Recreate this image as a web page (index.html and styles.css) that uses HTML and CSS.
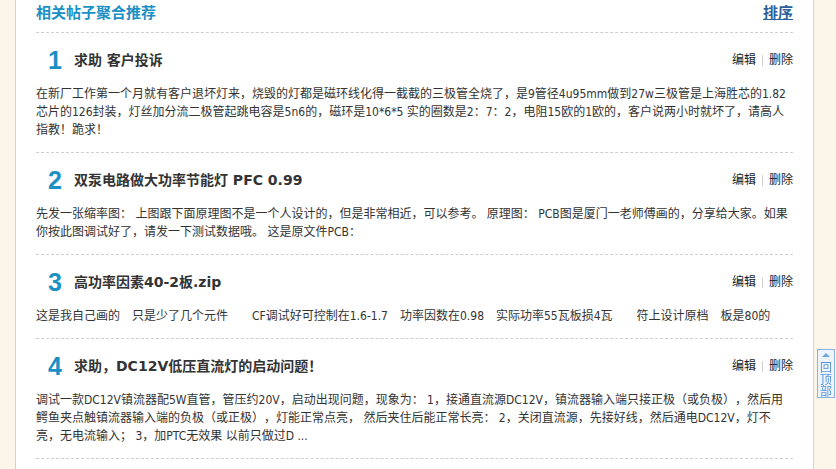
FILE: index.html
```html
<!DOCTYPE html>
<html lang="zh-CN">
<head>
<meta charset="utf-8">
<title>相关帖子聚合推荐</title>
<link rel="stylesheet" href="styles.css">
</head>
<body>
<div class="page">
  <div class="panel-head">
    <h2 class="panel-title">相关帖子聚合推荐</h2>
    <a class="sort-link" href="#">排序</a>
  </div>
  <ul class="post-list">
    <li class="post">
      <div class="post-head">
        <span class="post-num">1</span>
        <h3 class="post-title">求助 客户投诉</h3>
        <div class="post-ops"><a href="#">编辑</a><span class="sep"></span><a href="#">删除</a></div>
      </div>
      <p class="post-body">在新厂工作第一个月就有客户退坏灯来，烧毁的灯都是磁环线化得一截截的三极管全烧了，是9管径4u95mm做到27w三极管是上海胜芯的1.82芯片的126封装，灯丝加分流二极管起跳电容是5n6的，磁环是10*6*5 实的圈数是2：7：2，电阻15欧的1欧的，客户说两小时就坏了，请高人指教！跪求！</p>
    </li>
    <li class="post">
      <div class="post-head">
        <span class="post-num">2</span>
        <h3 class="post-title">双泵电路做大功率节能灯 PFC 0.99</h3>
        <div class="post-ops"><a href="#">编辑</a><span class="sep"></span><a href="#">删除</a></div>
      </div>
      <p class="post-body">先发一张缩率图： 上图跟下面原理图不是一个人设计的，但是非常相近，可以参考。 原理图： PCB图是厦门一老师傅画的，分享给大家。如果你按此图调试好了，请发一下测试数据哦。 这是原文件PCB：</p>
    </li>
    <li class="post">
      <div class="post-head">
        <span class="post-num">3</span>
        <h3 class="post-title">高功率因素40-2板.zip</h3>
        <div class="post-ops"><a href="#">编辑</a><span class="sep"></span><a href="#">删除</a></div>
      </div>
      <p class="post-body">这是我自己画的　只是少了几个元件　　CF调试好可控制在1.6-1.7　功率因数在0.98　实际功率55瓦板损4瓦　　符上设计原档　板是80的</p>
    </li>
    <li class="post">
      <div class="post-head">
        <span class="post-num">4</span>
        <h3 class="post-title">求助，DC12V低压直流灯的启动问题！</h3>
        <div class="post-ops"><a href="#">编辑</a><span class="sep"></span><a href="#">删除</a></div>
      </div>
      <p class="post-body">调试一款DC12V镇流器配5W直管，管压约20V，启动出现问题，现象为： 1，接通直流源DC12V，镇流器输入端只接正极（或负极），然后用鳄鱼夹点触镇流器输入端的负极（或正极），灯能正常点亮， 然后夹住后能正常长亮： 2，关闭直流源，先接好线，然后通电DC12V，灯不亮，无电流输入； 3，加PTC无效果 以前只做过D ...</p>
    </li>
  </ul>
</div>
<a class="back-top" href="#"><span class="back-arrow"></span>回顶部</a>
</body>
</html>
```

FILE: styles.css
```css
html, body {
  margin: 0;
  padding: 0;
}

body {
  background: #fbf6e9;
  color: #333;
  font: 12px/18px "DejaVu Sans Condensed", "Noto Sans CJK SC", sans-serif;
  text-spacing-trim: space-all;
  height: 469px;
  overflow: hidden;
}

a {
  text-decoration: none;
  color: inherit;
}

.page {
  margin-left: 15px;
  width: 799px;
  box-sizing: border-box;
  min-height: 469px;
  padding: 0 20px;
  background: #fff;
  border-left: 1px solid #c9d5db;
  border-right: 1px solid #d6d6d6;
}

.panel-head {
  display: flex;
  justify-content: space-between;
  align-items: flex-start;
  height: 32px;
  border-bottom: 1px dashed #cfcfcf;
}

.panel-title {
  margin: 0;
  font: bold 15px/27px "DejaVu Sans", "Noto Sans CJK SC", sans-serif;
  color: #1a90c4;
}

.sort-link {
  font: bold 15px/27px "DejaVu Sans", "Noto Sans CJK SC", sans-serif;
  color: #2d5f98;
  text-decoration: underline;
}

.post-list {
  list-style: none;
  margin: 0;
  padding: 0;
}

.post {
  padding: 14px 0 13px;
  border-bottom: 1px dashed #cfcfcf;
}

.post-head {
  display: flex;
  align-items: center;
  height: 26px;
}

.post-num {
  width: 22px;
  margin-left: 8px;
  text-align: center;
  font: bold 25px/26px "Liberation Sans", Arial, sans-serif;
  color: #1a90c4;
}

.post-title {
  margin: 0 0 0 8px;
  font: bold 14px/26px "DejaVu Sans", "Noto Sans CJK SC", sans-serif;
  color: #333;
}

.post-ops {
  margin-left: auto;
  display: flex;
  align-items: center;
  color: #222;
  font-size: 12px;
}

.sep {
  width: 1px;
  height: 11px;
  margin: 0 6px;
  background: #d0d0d0;
}

.post-body {
  margin: 12px 0 0;
  line-height: 18px;
}

.back-top {
  position: fixed;
  right: 1px;
  top: 349px;
  width: 16px;
  padding-top: 3px;
  border: 1px solid #8ab4e6;
  background: #eef4fc;
  color: #5b95dd;
  font: 12px/12px "Noto Sans CJK SC", sans-serif;
  text-align: center;
}

.back-arrow {
  display: block;
  width: 0;
  height: 0;
  margin: 0 auto 4px;
  border-left: 4px solid transparent;
  border-right: 4px solid transparent;
  border-bottom: 4px solid #6fa3e0;
}
```
